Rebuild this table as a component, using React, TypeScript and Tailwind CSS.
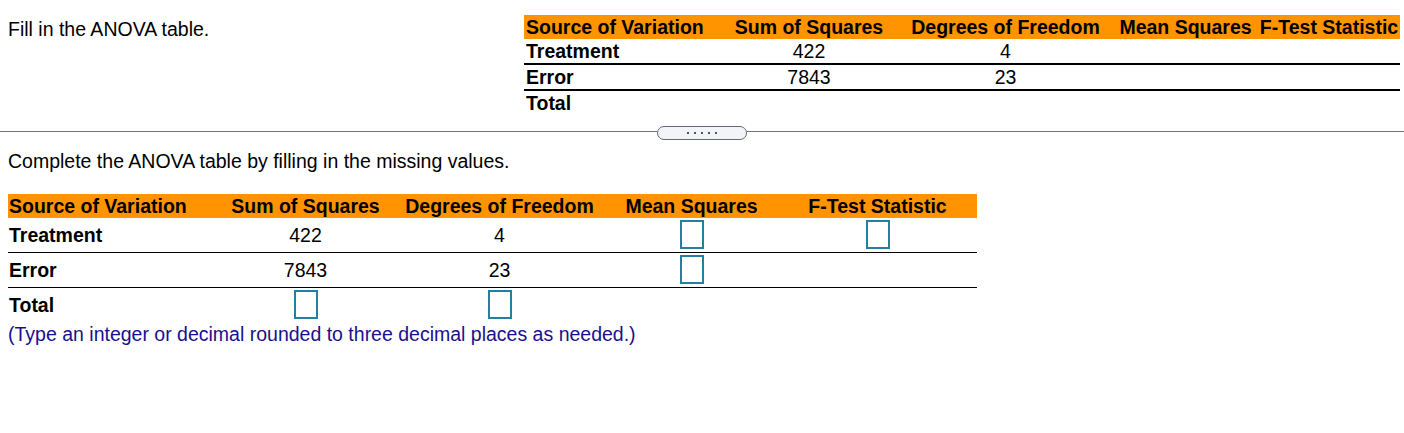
import React from "react";

const orange = "bg-[#ff9400]";

const topCols = [196, 178, 215, 145, 142];
const bottomCols = [200, 195, 193, 191, 190];

const headers = [
    "Source of Variation",
    "Sum of Squares",
    "Degrees of Freedom",
    "Mean Squares",
    "F-Test Statistic",
];

function Box() {
    return (
        <span className="block mx-auto w-[24px] h-[29px] border-2 border-[#2580a0] bg-white" />
    );
}

function TopTable() {
    const rows = [
        { name: "Treatment", ss: "422", df: "4" },
        { name: "Error", ss: "7843", df: "23" },
        { name: "Total", ss: "", df: "" },
    ];
    return (
        <table className="table-fixed border-collapse w-[876px] text-[19.5px] leading-6 text-black">
            <colgroup>
                {topCols.map((w, i) => (
                    <col key={i} style={{ width: w }} />
                ))}
            </colgroup>
            <thead>
                <tr className={orange}>
                    {headers.map((h, i) => (
                        <th
                            key={h}
                            className={
                                "h-6 p-0 font-bold whitespace-nowrap " +
                                (i === 0 ? "text-left pl-[2px]" : "text-center")
                            }
                        >
                            {h}
                        </th>
                    ))}
                </tr>
            </thead>
            <tbody>
                {rows.map((r, i) => (
                    <tr
                        key={r.name}
                        className={i < 2 ? "border-b-2 border-black" : ""}
                    >
                        <td className="h-6 p-0 pl-[2px] font-bold">{r.name}</td>
                        <td className="h-6 p-0 text-center">{r.ss}</td>
                        <td className="h-6 p-0 text-center">{r.df}</td>
                        <td className="h-6 p-0" />
                        <td className="h-6 p-0" />
                    </tr>
                ))}
            </tbody>
        </table>
    );
}

function BottomTable() {
    return (
        <table className="table-fixed border-collapse w-[969px] text-[19.5px] leading-6 text-black">
            <colgroup>
                {bottomCols.map((w, i) => (
                    <col key={i} style={{ width: w }} />
                ))}
            </colgroup>
            <thead>
                <tr className={orange}>
                    {headers.map((h, i) => (
                        <th
                            key={h}
                            className={
                                "h-6 p-0 font-bold whitespace-nowrap " +
                                (i === 0
                                    ? "text-left pl-[1px]"
                                    : i === 4
                                    ? "text-center pr-[9px]"
                                    : "text-center")
                            }
                        >
                            {h}
                        </th>
                    ))}
                </tr>
            </thead>
            <tbody>
                <tr className="border-b border-black">
                    <td className="h-[34px] p-0 pl-[1px] font-bold align-middle">Treatment</td>
                    <td className="h-[34px] p-0 text-center align-middle">422</td>
                    <td className="h-[34px] p-0 text-center align-middle">4</td>
                    <td className="h-[34px] p-0 pt-[2px] pb-[3px] align-middle">
                        <Box />
                    </td>
                    <td className="h-[34px] p-0 pt-[2px] pb-[3px] pr-[9px] align-middle">
                        <Box />
                    </td>
                </tr>
                <tr className="border-b border-black">
                    <td className="h-[34px] p-0 pl-[1px] font-bold align-middle">Error</td>
                    <td className="h-[34px] p-0 text-center align-middle">7843</td>
                    <td className="h-[34px] p-0 text-center align-middle">23</td>
                    <td className="h-[34px] p-0 pt-[2px] pb-[3px] align-middle">
                        <Box />
                    </td>
                    <td className="h-[34px] p-0" />
                </tr>
                <tr>
                    <td className="h-[34px] p-0 pl-[1px] font-bold align-middle">Total</td>
                    <td className="h-[34px] p-0 pt-[2px] pb-[3px] align-middle">
                        <Box />
                    </td>
                    <td className="h-[34px] p-0 pt-[2px] pb-[3px] align-middle">
                        <Box />
                    </td>
                    <td className="h-[34px] p-0" />
                    <td className="h-[34px] p-0" />
                </tr>
            </tbody>
        </table>
    );
}

export default function App() {
    return (
        <div className="w-[1404px] h-[433px] bg-white font-['Liberation_Sans',Arial,sans-serif] text-black">
            <div className="flex justify-between pt-[15px] pl-2 pr-1">
                <p className="pt-[2px] text-[19.5px] leading-6">Fill in the ANOVA table.</p>
                <TopTable />
            </div>

            <div className="flex items-start mt-[11px]">
                <div className="flex-1 h-px mt-[5px] bg-[#6b7480]" />
                <div className="w-[90px] h-[14px] rounded-full border border-[#5f6b78] bg-[#f2f4f7] flex items-center justify-center gap-[5px]">
                    {[0, 1, 2, 3, 4].map((d) => (
                        <span key={d} className="w-[2px] h-[2px] bg-[#4b5563]" />
                    ))}
                </div>
                <div className="flex-1 h-px mt-[5px] bg-[#6b7480]" />
            </div>

            <div className="px-2">
                <p className="mt-[9px] text-[19.5px] leading-6">
                    Complete the ANOVA table by filling in the missing values.
                </p>
                <div className="mt-[21px]">
                    <BottomTable />
                </div>
                <p className="text-[19.5px] leading-6 text-[#1a0f8e]">
                    (Type an integer or decimal rounded to three decimal places as needed.)
                </p>
            </div>
        </div>
    );
}
